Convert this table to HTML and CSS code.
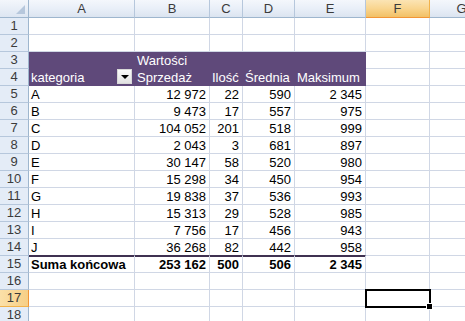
FILE: index.html
```html
<!DOCTYPE html>
<html lang="pl">
<head>
<meta charset="utf-8">
<title>Tabela przestawna</title>
<link rel="stylesheet" href="styles.css">
</head>
<body>
<div class="sheet">
  <div class="corner"><span class="tri"></span></div>
  <div class="ch">A</div><div class="ch">B</div><div class="ch">C</div><div class="ch">D</div><div class="ch">E</div><div class="ch act">F</div><div class="ch">G</div>

  <div class="rh">1</div><div class="c"></div><div class="c"></div><div class="c"></div><div class="c"></div><div class="c"></div><div class="c"></div><div class="c"></div>
  <div class="rh">2</div><div class="c"></div><div class="c"></div><div class="c"></div><div class="c"></div><div class="c"></div><div class="c"></div><div class="c"></div>

  <div class="rh">3</div><div class="c pv"></div><div class="c pv">Wartości</div><div class="c pv"></div><div class="c pv"></div><div class="c pv"></div><div class="c"></div><div class="c"></div>
  <div class="rh">4</div><div class="c pv kat"><span>kategoria</span><span class="dd"></span></div><div class="c pv">Sprzedaż</div><div class="c pv">Ilość</div><div class="c pv">Średnia</div><div class="c pv">Maksimum</div><div class="c"></div><div class="c"></div>

  <div class="rh">5</div><div class="c">A</div><div class="c n">12 972</div><div class="c n">22</div><div class="c n">590</div><div class="c n">2 345</div><div class="c"></div><div class="c"></div>
  <div class="rh">6</div><div class="c">B</div><div class="c n">9 473</div><div class="c n">17</div><div class="c n">557</div><div class="c n">975</div><div class="c"></div><div class="c"></div>
  <div class="rh">7</div><div class="c">C</div><div class="c n">104 052</div><div class="c n">201</div><div class="c n">518</div><div class="c n">999</div><div class="c"></div><div class="c"></div>
  <div class="rh">8</div><div class="c">D</div><div class="c n">2 043</div><div class="c n">3</div><div class="c n">681</div><div class="c n">897</div><div class="c"></div><div class="c"></div>
  <div class="rh">9</div><div class="c">E</div><div class="c n">30 147</div><div class="c n">58</div><div class="c n">520</div><div class="c n">980</div><div class="c"></div><div class="c"></div>
  <div class="rh">10</div><div class="c">F</div><div class="c n">15 298</div><div class="c n">34</div><div class="c n">450</div><div class="c n">954</div><div class="c"></div><div class="c"></div>
  <div class="rh">11</div><div class="c">G</div><div class="c n">19 838</div><div class="c n">37</div><div class="c n">536</div><div class="c n">993</div><div class="c"></div><div class="c"></div>
  <div class="rh">12</div><div class="c">H</div><div class="c n">15 313</div><div class="c n">29</div><div class="c n">528</div><div class="c n">985</div><div class="c"></div><div class="c"></div>
  <div class="rh">13</div><div class="c">I</div><div class="c n">7 756</div><div class="c n">17</div><div class="c n">456</div><div class="c n">943</div><div class="c"></div><div class="c"></div>
  <div class="rh">14</div><div class="c last">J</div><div class="c n last">36 268</div><div class="c n last">82</div><div class="c n last">442</div><div class="c n last">958</div><div class="c"></div><div class="c"></div>
  <div class="rh">15</div><div class="c tot">Suma końcowa</div><div class="c n tot">253 162</div><div class="c n tot">500</div><div class="c n tot">506</div><div class="c n tot">2 345</div><div class="c"></div><div class="c"></div>

  <div class="rh">16</div><div class="c"></div><div class="c"></div><div class="c"></div><div class="c"></div><div class="c"></div><div class="c"></div><div class="c"></div>
  <div class="rh act">17</div><div class="c"></div><div class="c"></div><div class="c"></div><div class="c"></div><div class="c"></div><div class="c sel"></div><div class="c"></div>
  <div class="rh">18</div><div class="c"></div><div class="c"></div><div class="c"></div><div class="c"></div><div class="c"></div><div class="c"></div><div class="c"></div>
</div>
</body>
</html>
```

FILE: styles.css
```css
html, body {
  margin: 0;
  padding: 0;
  background: #ffffff;
  overflow: hidden;
  width: 465px;
  height: 321px;
}

.sheet {
  display: grid;
  grid-template-columns: 29px 106px 75px 33px 52px 71px 64px 64px;
  grid-template-rows: 18px repeat(18, 17px);
  font-family: "Liberation Sans", Arial, sans-serif;
  font-size: 13px;
  color: #000;
}

.sheet > div {
  box-sizing: border-box;
  border-right: 1px solid #d0d7e5;
  border-bottom: 1px solid #d0d7e5;
  line-height: 15px;
  white-space: nowrap;
  overflow: visible;
}

.corner {
  background: linear-gradient(#f3f6fb, #dde6f2);
  position: relative;
  border-color: #9eb6ce !important;
}

.corner .tri {
  position: absolute;
  right: 3px;
  bottom: 3px;
  width: 0;
  height: 0;
  border-left: 9px solid transparent;
  border-bottom: 9px solid #b6c7dc;
}

.sheet > .ch {
  background: linear-gradient(#f4f7fc 0%, #e9eff8 50%, #dbe4f0 100%);
  border-right-color: #b6c7dc;
  border-bottom-color: #9eb6ce;
  text-align: center;
  line-height: 17px;
  color: #3b3b3b;
  overflow: hidden;
}

.sheet > .ch.act {
  background: linear-gradient(#fbe4b4 0%, #f9d58f 50%, #f2c066 100%);
  border-right-color: #f2b24a;
  border-bottom-color: #f29536;
}

.sheet > .rh {
  background: #e4ecf7;
  border-right-color: #9eb6ce;
  border-bottom-color: #b6c7dc;
  text-align: center;
  line-height: 16px;
  color: #3b3b3b;
}

.sheet > .rh.act {
  background: linear-gradient(to right, #fbe0a8, #f7cf86);
  border-bottom-color: #f2b24a;
  border-right-color: #f29536;
}

.c {
  display: flex;
  align-items: flex-end;
  padding: 0 2px;
}

.c.n {
  justify-content: flex-end;
  padding-right: 3px;
}

.sheet > .pv {
  background: #5f497a;
  border-color: #5f497a;
  color: #ffffff;
  padding-left: 2px;
}

.kat {
  justify-content: space-between;
  align-items: flex-end;
}

.dd {
  display: block;
  width: 15px;
  height: 15px;
  margin: 0 0 1px 0;
  box-sizing: border-box;
  background: linear-gradient(#fbfbfb, #e2e2e2);
  border: 1px solid #d8d8d8;
  position: relative;
}

.dd::after {
  content: "";
  position: absolute;
  left: 3px;
  top: 5px;
  border-left: 4px solid transparent;
  border-right: 4px solid transparent;
  border-top: 4px solid #000;
}

.sheet > .last {
  border-bottom: 1px solid #3f3151;
}

.sheet > .tot {
  font-weight: bold;
  box-shadow: inset 0 1px 0 #3f3151;
}

.sel {
  position: relative;
}

.sel::before {
  content: "";
  position: absolute;
  left: -1px;
  top: -1px;
  right: -2px;
  bottom: -2px;
  border: 2px solid #000;
}

.sel::after {
  content: "";
  position: absolute;
  right: -4px;
  bottom: -4px;
  width: 5px;
  height: 5px;
  background: #000;
  border: 1px solid #fff;
}
```
